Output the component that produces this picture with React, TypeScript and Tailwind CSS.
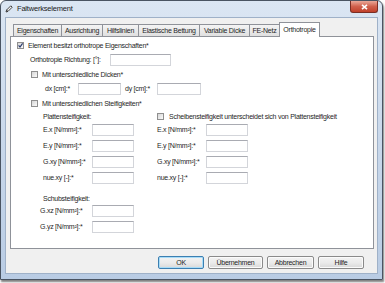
import React from "react";

const Checkbox = ({ checked = false }: { checked?: boolean }) => (
  <div className="relative flex-none w-[7px] h-[7px] border border-[#8f8f8f] bg-gradient-to-br from-[#d6d6d6] to-[#fbfbfb]">
    {checked && (
      <svg className="absolute left-[-1px] top-[-1px]" width="7" height="7" viewBox="0 0 7 7">
        <path d="M1.6 3.4 L3 5.1 L5.6 1.3" stroke="#2b3c6e" strokeWidth="1.2" fill="none" />
      </svg>
    )}
  </div>
);

const Input = ({ w = "w-[42px]" }: { w?: string }) => (
  <div className={`flex-none h-[12px] ${w} bg-white border border-[#d3d5da] border-t-[#a9abb2]`} />
);

const Field = ({ label }: { label: string }) => (
  <div className="flex items-center">
    <div className="w-[49px] whitespace-nowrap">{label}</div>
    <Input />
  </div>
);

const Tab = ({ label, cls }: { label: string; cls: string }) => (
  <div
    className={`h-[12px] -ml-px flex items-center justify-center whitespace-nowrap border border-b-0 border-[#8f9299] bg-gradient-to-b from-[#f4f4f4] to-[#e0e0e0] ${cls}`}
  >
    {label}
  </div>
);

const Btn = ({ label, cls, def = false }: { label: string; cls: string; def?: boolean }) => (
  <div
    className={`h-[13px] flex items-center justify-center rounded-[2px] border ${
      def ? "border-[#3c7fb1] shadow-[inset_0_0_0_1px_#a8dcf8]" : "border-[#8a8a8a] shadow-[inset_0_0_0_1px_#fbfbfb]"
    } bg-gradient-to-b from-[#f3f3f3] via-[#ebebeb] to-[#d9d9d9] ${cls}`}
  >
    {label}
  </div>
);

export default function App() {
  return (
    <div className="w-[385px] h-[283px] bg-white overflow-hidden font-['Liberation_Sans',Arial,sans-serif] text-[7px] leading-[10px] tracking-[-0.25px] text-[#1f1f1f]">
      <div className="relative w-[383px] h-[280px] rounded-t-[6px] border border-[#4a5462] bg-gradient-to-b from-[#dbe6f3] via-[#c9d8eb] to-[#b9cce4] shadow-[1px_2px_2px_rgba(0,0,0,0.5)] flex flex-col px-[4px] pb-[5px]">
        {/* title bar */}
        <div className="h-[16px] flex items-center">
          <svg width="8" height="8" viewBox="0 0 8 8" className="flex-none">
            <path d="M1 7 L1.6 5 L5.8 0.8 L7.2 2.2 L3 6.4 Z" fill="#f4f4f4" stroke="#2d2d2d" strokeWidth="0.9" strokeLinejoin="round" />
            <path d="M1.6 5 L3 6.4" stroke="#2d2d2d" strokeWidth="0.8" />
          </svg>
          <span className="ml-[4px] text-[7.5px] tracking-[-0.2px] text-[#1b1b1b]">Faltwerkselement</span>
        </div>
        <div className="absolute top-0 right-[4px] w-[28px] h-[12px] rounded-b-[3px] border border-t-0 border-[#7a2e24] bg-gradient-to-b from-[#e9a899] via-[#d0604c] to-[#c0402a] flex items-center justify-center">
          <svg width="7" height="6" viewBox="0 0 7 6">
            <path d="M1 0.8 L6 5.2 M6 0.8 L1 5.2" stroke="#ffffff" strokeWidth="1.6" />
          </svg>
        </div>

        {/* client area */}
        <div className="flex-1 flex flex-col bg-[#f0f0f0] border border-[#9fb1c8] pt-[4px] pl-[4px] pr-[3px]">
          {/* tabs */}
          <div className="h-[14px] flex items-end pl-[4px]">
            <Tab label="Eigenschaften" cls="w-[49px]" />
            <Tab label="Ausrichtung" cls="w-[42px]" />
            <Tab label="Hilfslinien" cls="w-[37px]" />
            <Tab label="Elastische Bettung" cls="w-[62px]" />
            <Tab label="Variable Dicke" cls="w-[51px]" />
            <Tab label="FE-Netz" cls="w-[31px]" />
            <div className="relative z-10 h-[15px] -mb-px -ml-px w-[41px] flex items-start pt-[2px] justify-center bg-white border border-b-0 border-[#8f9299]">
              Orthotropie
            </div>
          </div>

          {/* panel */}
          <div className="h-[213px] bg-white border border-[#8f9299] flex flex-col">
            <div className="mt-[5px] ml-[6px] h-[7px] flex items-center gap-[4px]">
              <Checkbox checked />
              <span>Element besitzt orthotrope Eigenschaften*</span>
            </div>
            <div className="mt-[5px] ml-[19px] flex items-center">
              <div className="w-[80px]">Orthotropie Richtung: [°]:</div>
              <Input w="w-[61px]" />
            </div>
            <div className="mt-[5px] ml-[20px] h-[7px] flex items-center gap-[4px]">
              <Checkbox />
              <span>Mit unterschiedliche Dicken*</span>
            </div>
            <div className="mt-[5px] ml-[34px] flex items-center">
              <div className="w-[33px]">dx [cm]:*</div>
              <Input w="w-[43px]" />
              <div className="ml-[4px] w-[32px]">dy [cm]:*</div>
              <Input w="w-[44px]" />
            </div>
            <div className="mt-[5px] ml-[20px] h-[7px] flex items-center gap-[4px]">
              <Checkbox />
              <span>Mit unterschiedlichen Steifigkeiten*</span>
            </div>
            <div className="mt-[6px] ml-[32px] h-[7px] flex items-center">
              <div className="w-[114px]">Plattensteifigkeit:</div>
              <Checkbox />
              <span className="ml-[5px]">Scheibensteifigkeit unterscheidet sich von Plattensteifigkeit</span>
            </div>
            <div className="mt-[4px] ml-[32px] grid grid-cols-[114px_auto] gap-y-[4px]">
              <Field label="E.x [N/mm²]:*" />
              <Field label="E.x [N/mm²]:*" />
              <Field label="E.y [N/mm²]:*" />
              <Field label="E.y [N/mm²]:*" />
              <Field label="G.xy [N/mm²]:*" />
              <Field label="G.xy [N/mm²]:*" />
              <Field label="nue.xy [-]:*" />
              <Field label="nue.xy [-]:*" />
            </div>
            <div className="mt-[10px] ml-[32px] h-[10px] flex items-center">Schubsteifigkeit:</div>
            <div className="mt-[1px] ml-[29px] flex flex-col gap-[4px]">
              <div className="flex items-center">
                <div className="w-[52px]">G.xz [N/mm²]:*</div>
                <Input />
              </div>
              <div className="flex items-center">
                <div className="w-[52px]">G.yz [N/mm²]:*</div>
                <Input />
              </div>
            </div>
          </div>

          {/* buttons */}
          <div className="mt-[7px] flex justify-end gap-[4px] pr-[10px]">
            <Btn label="OK" cls="w-[46px]" def />
            <Btn label="Übernehmen" cls="w-[55px]" />
            <Btn label="Abbrechen" cls="w-[47px]" />
            <Btn label="Hilfe" cls="w-[46px]" />
          </div>
        </div>
      </div>
    </div>
  );
}
